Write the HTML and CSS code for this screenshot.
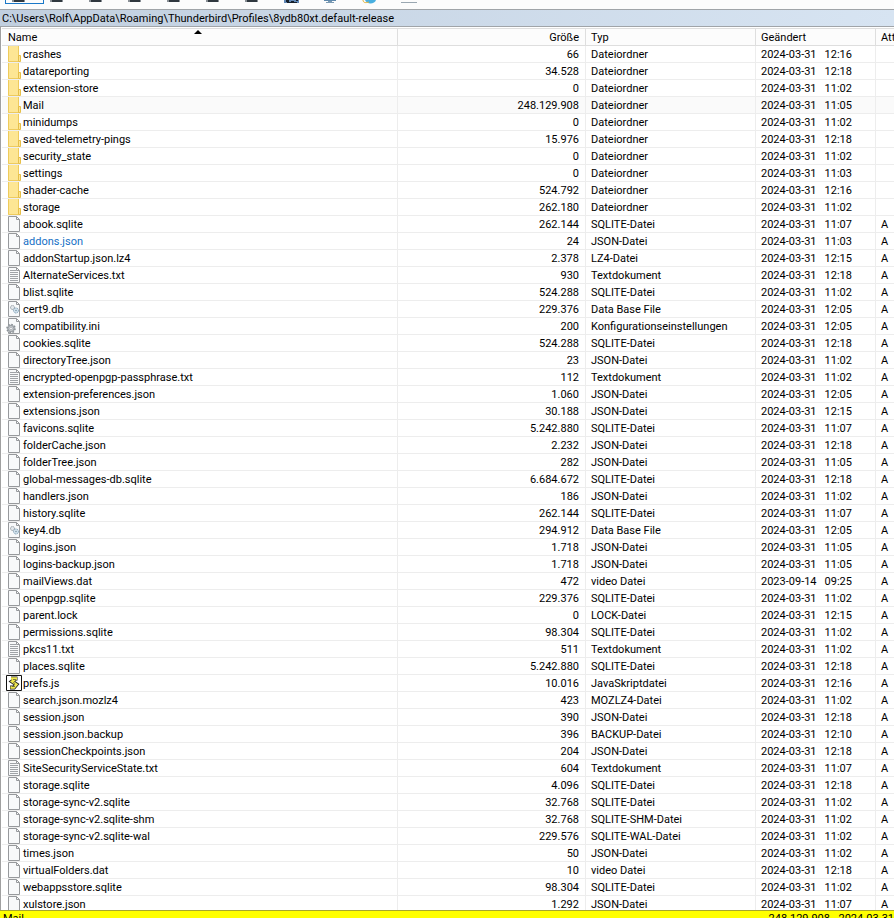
FILE: index.html
```html
<!DOCTYPE html>
<html lang="de">
<head>
    <meta charset="UTF-8">
    <meta name="viewport" content="width=device-width, initial-scale=1.0">
    <title>8ydb80xt.default-release</title>
    <link rel="stylesheet" href="styles.css">
</head>
<body>
    <svg class="symbols" aria-hidden="true">
        <symbol id="folder" viewBox="0 0 16 16">
            <path d="M2 0h11v16H2z" fill="#fde694"/>
            <path d="M2.5 0v15.500h10V0" fill="none" stroke="#eecb5c"/>
            <path d="M12.500 9.500h2v6h-2z" fill="#fde694" stroke="#e6bf48"/>
        </symbol>
        <symbol id="file" viewBox="0 0 16 16">
            <path d="M2.500.500h8l3 3v12h-11z" fill="#f8f9fa" stroke="#97999c"/>
            <path d="M10.500.500v3h3" fill="none" stroke="#97999c"/>
        </symbol>
        <symbol id="text" viewBox="0 0 16 16">
            <use href="#file"/>
            <path d="M4 3.500h6M4 5.500h8M4 7.500h8M4 9.500h8M4 11.500h8M4 13.500h8" stroke="#a0a3a7" fill="none"/>
        </symbol>
        <symbol id="db" viewBox="0 0 16 16">
            <use href="#file"/>
            <circle cx="6.500" cy="6.500" r="2" fill="#e3e8ec" stroke="#8a9299" stroke-dasharray="1.2 .6"/>
            <circle cx="10" cy="9.500" r="2.500" fill="#d3e3ee" stroke="#7e9db2" stroke-dasharray="1.2 .6"/>
            <circle cx="10" cy="9.500" r=".7" fill="#6e8796"/>
        </symbol>
        <symbol id="ini" viewBox="0 0 16 16">
            <use href="#file"/>
            <circle cx="5" cy="10.500" r="4" fill="#c3c8cc" stroke="#8a9095" stroke-width="1.600" stroke-dasharray="1.6 1.5"/>
            <circle cx="5" cy="10.500" r="3" fill="#c9cdd1" stroke="#959a9f"/>
            <circle cx="5" cy="10.500" r="1.200" fill="#fff" stroke="#85898e" stroke-width=".5"/>
        </symbol>
        <symbol id="script" viewBox="0 0 16 16">
            <path d="M.5.5h15v15H.5z" fill="#fff" stroke="#111"/>
            <path d="M5 3.500h6.500M10 3.500L6 6.500l4.500 3L8 12.500H4" fill="none" stroke="#222" stroke-width="4"/>
            <path d="M5 3.500h6M10 3.500L6 6.500l4.500 3L8 12.500H4.500" fill="none" stroke="#f1e94e" stroke-width="2.300"/>
            <path d="M7 4.500h3M7 7.500l2 1M6 11.500h3" fill="none" stroke="#333" stroke-width=".6"/>
        </symbol>
        <symbol id="panel" viewBox="0 0 16 8">
            <path d="M0 0h13v2H0z" fill="#8a9096"/>
            <path d="M2 0h10v2H2z" fill="#30383f"/>
        </symbol>
    </svg>

    <div class="toolbar">
        <button class="tool active" aria-label="Details"><svg><use href="#panel"/></svg></button>
        <button class="tool" aria-label="Liste"><svg><use href="#panel"/></svg></button>
        <button class="tool" aria-label="Symbole"><svg><use href="#panel"/></svg></button>
        <button class="tool" aria-label="Vorschau"><svg><use href="#panel"/></svg></button>
        <button class="tool" aria-label="Baum"><svg><use href="#panel"/></svg></button>
        <button class="tool" aria-label="Filter"><svg><use href="#panel"/></svg></button>
        <button class="tool" aria-label="Sortieren"><svg><use href="#panel"/></svg></button>
        <button class="tool" aria-label="Suchen"><svg viewBox="0 0 16 8"><path d="M0 0h15v3H0z" fill="#6187b5"/><path d="M2 0h3v2h2V1h3v1h3v1H3V2H2zM12 0h2v1h-2z" fill="#16202c"/></svg></button>
        <button class="tool" aria-label="Computer"><svg viewBox="0 0 16 8"><path d="M1 0h12v1H1z" fill="#5f89ac"/><path d="M5 1h4v1h2v1H3V2h2z" fill="#7b9ab3"/></svg></button>
        <button class="tool" aria-label="Internet"><svg viewBox="0 0 16 8"><path d="M3 0h11c-1 4-9 5-11 0z" fill="#49afe0"/><path d="M1 0c0 3 3 3 6 2" fill="none" stroke="#e0b340"/></svg></button>
        <button class="tool" aria-label="Laufwerk"><svg viewBox="0 0 16 8"><path d="M0 2h16v1H0z" fill="#9aa7b1"/></svg></button>
    </div>

    <div class="path">C:\Users\Rolf\AppData\Roaming\Thunderbird\Profiles\8ydb80xt.default-release</div>

    <div class="list">
        <table id="files">
            <colgroup>
                <col class="col-name">
                <col class="col-size">
                <col class="col-type">
                <col class="col-date">
                <col class="col-attr">
            </colgroup>
            <thead>
                <tr>
                    <th class="sorted">Name</th>
                    <th class="size">Größe</th>
                    <th>Typ</th>
                    <th>Geändert</th>
                    <th>Attribute</th>
                </tr>
            </thead>
            <tbody>
            </tbody>
        </table>
    </div>

    <div class="status">
        <span>Mail</span>
        <span>248.129.908 - 2024-03-31</span>
    </div>

    <script>
        // name | size | type | date | time
        const data = `crashes|66|Dateiordner|2024-03-31|12:16
datareporting|34.528|Dateiordner|2024-03-31|12:18
extension-store|0|Dateiordner|2024-03-31|11:02
Mail|248.129.908|Dateiordner|2024-03-31|11:05
minidumps|0|Dateiordner|2024-03-31|11:02
saved-telemetry-pings|15.976|Dateiordner|2024-03-31|12:18
security_state|0|Dateiordner|2024-03-31|11:02
settings|0|Dateiordner|2024-03-31|11:03
shader-cache|524.792|Dateiordner|2024-03-31|12:16
storage|262.180|Dateiordner|2024-03-31|11:02
abook.sqlite|262.144|SQLITE-Datei|2024-03-31|11:07
addons.json|24|JSON-Datei|2024-03-31|11:03
addonStartup.json.lz4|2.378|LZ4-Datei|2024-03-31|12:15
AlternateServices.txt|930|Textdokument|2024-03-31|12:18
blist.sqlite|524.288|SQLITE-Datei|2024-03-31|11:02
cert9.db|229.376|Data Base File|2024-03-31|12:05
compatibility.ini|200|Konfigurationseinstellungen|2024-03-31|12:05
cookies.sqlite|524.288|SQLITE-Datei|2024-03-31|12:18
directoryTree.json|23|JSON-Datei|2024-03-31|11:02
encrypted-openpgp-passphrase.txt|112|Textdokument|2024-03-31|11:02
extension-preferences.json|1.060|JSON-Datei|2024-03-31|12:05
extensions.json|30.188|JSON-Datei|2024-03-31|12:15
favicons.sqlite|5.242.880|SQLITE-Datei|2024-03-31|11:07
folderCache.json|2.232|JSON-Datei|2024-03-31|12:18
folderTree.json|282|JSON-Datei|2024-03-31|11:05
global-messages-db.sqlite|6.684.672|SQLITE-Datei|2024-03-31|12:18
handlers.json|186|JSON-Datei|2024-03-31|11:02
history.sqlite|262.144|SQLITE-Datei|2024-03-31|11:07
key4.db|294.912|Data Base File|2024-03-31|12:05
logins.json|1.718|JSON-Datei|2024-03-31|11:05
logins-backup.json|1.718|JSON-Datei|2024-03-31|11:05
mailViews.dat|472|video Datei|2023-09-14|09:25
openpgp.sqlite|229.376|SQLITE-Datei|2024-03-31|11:02
parent.lock|0|LOCK-Datei|2024-03-31|12:15
permissions.sqlite|98.304|SQLITE-Datei|2024-03-31|11:02
pkcs11.txt|511|Textdokument|2024-03-31|11:02
places.sqlite|5.242.880|SQLITE-Datei|2024-03-31|12:18
prefs.js|10.016|JavaSkriptdatei|2024-03-31|12:16
search.json.mozlz4|423|MOZLZ4-Datei|2024-03-31|11:02
session.json|390|JSON-Datei|2024-03-31|12:18
session.json.backup|396|BACKUP-Datei|2024-03-31|12:10
sessionCheckpoints.json|204|JSON-Datei|2024-03-31|12:18
SiteSecurityServiceState.txt|604|Textdokument|2024-03-31|11:07
storage.sqlite|4.096|SQLITE-Datei|2024-03-31|12:18
storage-sync-v2.sqlite|32.768|SQLITE-Datei|2024-03-31|11:02
storage-sync-v2.sqlite-shm|32.768|SQLITE-SHM-Datei|2024-03-31|11:02
storage-sync-v2.sqlite-wal|229.576|SQLITE-WAL-Datei|2024-03-31|11:02
times.json|50|JSON-Datei|2024-03-31|11:02
virtualFolders.dat|10|video Datei|2024-03-31|12:18
webappsstore.sqlite|98.304|SQLITE-Datei|2024-03-31|11:02
xulstore.json|1.292|JSON-Datei|2024-03-31|11:07`;

        const icons = { txt: 'text', db: 'db', ini: 'ini', js: 'script' };
        const tbody = document.querySelector('#files tbody');

        data.split('\n').forEach(line => {
            const [name, size, type, date, time] = line.split('|');
            const isFolder = type === 'Dateiordner';
            const icon = isFolder ? 'folder' : icons[name.split('.').pop()] || 'file';
            const row = tbody.insertRow(-1);
            if (name === 'Mail') row.className = 'current';
            if (name === 'addons.json') row.className = 'compressed';
            row.innerHTML = `
                <td><div class="name"><svg class="icon"><use href="#${icon}"/></svg><span>${name}</span></div></td>
                <td class="size">${size}</td>
                <td>${type}</td>
                <td><div class="date"><span>${date}</span><span>${time}</span></div></td>
                <td>${isFolder ? '' : 'A'}</td>`;
        });
    </script>
</body>
</html>
```

FILE: styles.css
```css
* {
    box-sizing: border-box;
}

body {
    display: flex;
    flex-direction: column;
    height: 100vh;
    margin: 0;
    overflow: hidden;
    background-color: #fff;
    color: #000;
    font-family: Roboto, sans-serif;
    font-size: 11px;
    line-height: 16px;
}

.symbols {
    display: none;
}

.toolbar {
    display: flex;
    flex: none;
    height: 9px;
    padding-left: 5px;
    background-color: #fcfcfc;
}

.tool {
    width: 39px;
    height: 4px;
    padding: 0 0 0 6px;
    border: 0;
    background: none;
    text-align: left;
    overflow: hidden;
}

.tool.active {
    border: 1px solid #1a78c8;
    border-top: 0;
}

.tool svg {
    display: block;
    width: 16px;
    height: 8px;
}

.path {
    flex: none;
    height: 18px;
    padding-left: 2px;
    border: solid #a0a4a8;
    border-width: 1px 0;
    background: linear-gradient(to right, #c1cfdf, #d7e4f2);
    line-height: 18px;
    white-space: nowrap;
}

.list {
    flex: 1;
    min-height: 0;
    padding-top: 1px;
    border-left: 1px solid #a0a0a0;
    overflow: hidden;
}

table {
    width: 100%;
    table-layout: fixed;
    border-collapse: separate;
    border-spacing: 0;
    padding-left: 1px;
}

.col-name {
    width: auto;
}

.col-size {
    width: 188px;
}

.col-type {
    width: 170px;
}

.col-date {
    width: 120px;
}

.col-attr {
    width: 18px;
}

th, td {
    height: 17px;
    padding: 1px 5px 0;
    border-right: 1px solid #ededed;
    border-bottom: 1px solid #ededed;
    line-height: 15px;
    text-align: left;
    font-weight: normal;
    white-space: nowrap;
    overflow: hidden;
}

th {
    position: relative;
    border-top: 1px solid #dedede;
    border-right-color: #dedede;
    border-bottom-color: #dedede;
    background-color: #fcfcfc;
}

th:last-child, td:last-child {
    padding-right: 0;
    border-right: 0;
}

td:first-child {
    padding-top: 0;
}

th.sorted {
    padding-left: 6px;
}

.size {
    padding-right: 6px;
    text-align: right;
}

/* sort arrow on top of the header cell */
.sorted::after {
    content: "";
    position: absolute;
    top: 1px;
    left: calc(50% - 6px);
    border: solid transparent;
    border-width: 0 4px 4px;
    border-bottom-color: #000;
}

.name {
    display: flex;
    gap: 1px;
    height: 16px;
    line-height: 17px;
}

.icon {
    flex: none;
    width: 16px;
    height: 16px;
    margin-left: -1px;
}

.date {
    display: flex;
    gap: 8px;
}

.current td {
    background-color: #fafafa;
}

.compressed .name {
    color: #1670c5;
}

.status {
    display: flex;
    flex: none;
    justify-content: space-between;
    height: 8px;
    padding: 0 0 0 3px;
    border-top: 1px solid #a7a72c;
    background-color: #ff0;
    overflow: hidden;
}
```
